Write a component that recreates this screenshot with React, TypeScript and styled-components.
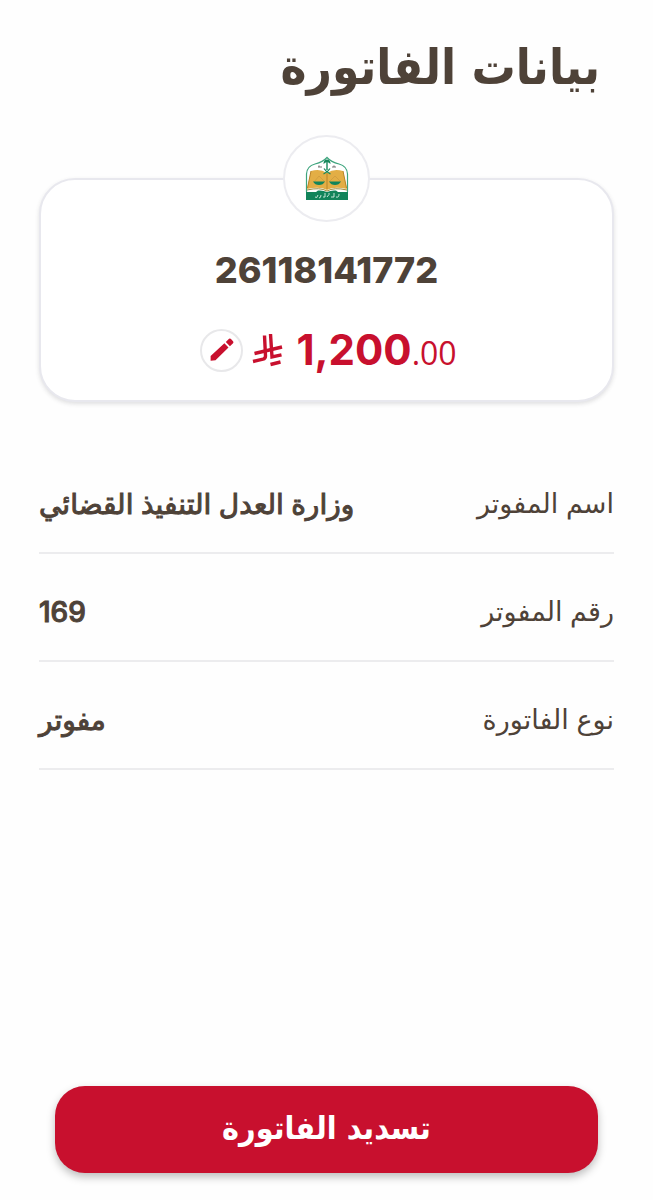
import React from "react";
import styled, { createGlobalStyle } from "styled-components";

const GlobalStyle = createGlobalStyle`
  * { box-sizing: border-box; }
  body {
    margin: 0;
    background: #fefefe;
    color: #4e4238;
    font-family: Inter, "DejaVu Sans", sans-serif;
  }
`;

const Page = styled.main`
  display: flex;
  flex-direction: column;
  min-height: 100vh;
  padding: 30px 39px 27px;
`;

const Title = styled.h1`
  margin: 0;
  padding: 0 14px;
  font-family: "DejaVu Sans Condensed", "DejaVu Sans", sans-serif;
  font-size: 49px;
  line-height: 76px;
  font-weight: 700;
`;

const Card = styled.section`
  display: flex;
  flex-direction: column;
  align-items: center;
  margin-top: 72px;
  padding-bottom: 23px;
  border: 2px solid #e8e8ee;
  border-radius: 36px;
  background: #fff;
  box-shadow: 0 2px 4px rgba(60, 60, 70, 0.16);
`;

const Emblem = styled.div`
  display: grid;
  place-items: center;
  width: 87px;
  height: 87px;
  margin-top: -45px;
  border: 2px solid #ececf0;
  border-radius: 50%;
  background: #fff;
`;

const BillNumber = styled.p`
  margin: 24px 0 0;
  font-size: 36px;
  line-height: 48px;
  font-weight: 800;
`;

const AmountRow = styled.div`
  display: flex;
  align-items: center;
  margin-top: 29px;
  padding-left: 4px;
  color: #c8102e;
`;

const EditButton = styled.button`
  display: grid;
  place-items: center;
  width: 43px;
  height: 43px;
  margin-right: 9px;
  padding: 0;
  border: 2px solid #e8e8ea;
  border-radius: 50%;
  background: #fff;
  color: inherit;
`;

const Amount = styled.span`
  margin-left: 13px;
  font-size: 42px;
  line-height: 54px;
  font-weight: 700;
`;

const Decimals = styled.span`
  font-family: "Open Sans", sans-serif;
  font-size: 32px;
  line-height: 40px;
  font-weight: 400;
`;

const Details = styled.dl`
  margin: 44px 0 0;
`;

const DetailRow = styled.div`
  display: flex;
  align-items: center;
  justify-content: space-between;
  height: 108px;
  padding-top: 10px;
  border-bottom: 2px solid #ececee;
  line-height: 40px;
`;

const Label = styled.dt`
  font-size: 27px;
  font-weight: 400;
`;

const Value = styled.dd`
  margin: 0;
  font-size: 28px;
  font-weight: 500;
  -webkit-text-stroke: 1px currentColor;
`;

const PayButton = styled.button`
  height: 87px;
  margin: auto 16px 0;
  padding: 0 0 4px;
  border: 0;
  border-radius: 30px;
  background: #c8102e;
  color: #fff;
  font-family: "DejaVu Sans Condensed", "DejaVu Sans", sans-serif;
  font-size: 32px;
  line-height: 48px;
  font-weight: 700;
  box-shadow: 0 4px 8px rgba(0, 0, 0, 0.26);
`;

const details = [
  { label: "اسم المفوتر", value: "وزارة العدل التنفيذ القضائي" },
  { label: "رقم المفوتر", value: "169" },
  { label: "نوع الفاتورة", value: "مفوتر" },
];

function MinistryLogo() {
  return (
    <svg width="44" height="46" viewBox="0 0 44 46" role="img" aria-label="وزارة العدل">
      <path d="M1.500 36V18Q2 10 10 8Q18 6 22 1.500Q26 6 34 8Q42 10 42.500 18V36" fill="#fff" stroke="#3da47d" strokeWidth="1.2" />
      <path d="M6 15Q15 12 22 17Q29 12 38 15L42 33Q29 30 22 34Q15 30 2 33Z" fill="#e3ae45" />
      <path d="M22 17V33M6 15L2.500 32M38 15L41.500 32" stroke="#b98429" strokeWidth="1" fill="none" />
      <path d="M2 34Q15 31 22 35Q29 31 42 34" stroke="#9c8a3c" strokeWidth="1" fill="none" />
      <path d="M22 5V14" stroke="#16885c" strokeWidth="1.400" />
      <path d="M22 3.500Q18.500 3.500 18.500 8Q21 6 22 6Q23 6 25.500 8Q25.500 3.500 22 3.500Z" fill="#16885c" />
      <path d="M18.500 18Q23 16 25 12.500M25.500 18Q21 16 19 12.500" stroke="#16885c" strokeWidth="1.200" fill="none" />
      <path d="M13 11H17M14 9.500V11M27 11H31M29 9.500V11" stroke="#777" strokeWidth="1.200" fill="none" />
      <path d="M9 26L14 20L20 26M24 26L30 20L36 26" stroke="#c8953a" strokeWidth="0.6" fill="none" />
      <path d="M8 25.500H20Q18 29 14 29Q10 29 8 25.500ZM24 25.500H36Q34 29 30 29Q26 29 24 25.500Z" fill="#12845a" />
      <path d="M1 36H11L13 34.500Q18 34 22 36Q26 34 31 34.500L33 36H43V44H1Z" fill="#12845a" />
      <path d="M10 41Q12 43 13 39M14 42Q16 42 16 39M18 41H20V37M22 41Q25 38 24 37M26 41H29V37M31 41Q34 42 34 38" stroke="#d9eee4" strokeWidth="0.9" fill="none" />
    </svg>
  );
}

function RiyalSign() {
  return (
    <svg width="31" height="34" viewBox="0 0 31 34" fill="none" stroke="currentColor" strokeWidth="3.400" role="img" aria-label="ريال">
      <path d="M12.500 2.500L13.500 23Q13.500 25.500 11 26.200L1 28.500" />
      <path d="M18.500 1L20 24L29.500 21.800" />
      <path d="M2.500 20.500L30 14" />
      <path d="M18.500 31.500L28.500 29" />
    </svg>
  );
}

function PencilIcon() {
  return (
    <svg width="26" height="26" viewBox="0 0 24 24" fill="currentColor" aria-hidden="true">
      <path d="M1.500 17.500L14.200 5.800L18 9.800L6 21.500L1.500 22ZM15.500 4.500L18.500 1.700Q19.500 1 20.500 2L22.200 4Q23 5 22.200 5.800L19.300 8.500Z" />
    </svg>
  );
}

export default function App() {
  return (
    <Page dir="rtl" lang="ar">
      <GlobalStyle />
      <Title>بيانات الفاتورة</Title>
      <Card>
        <Emblem>
          <MinistryLogo />
        </Emblem>
        <BillNumber>26118141772</BillNumber>
        <AmountRow dir="ltr">
          <EditButton type="button" aria-label="تعديل المبلغ">
            <PencilIcon />
          </EditButton>
          <RiyalSign />
          <Amount>
            1,200<Decimals>.00</Decimals>
          </Amount>
        </AmountRow>
      </Card>
      <Details>
        {details.map((item) => (
          <DetailRow key={item.label}>
            <Label>{item.label}</Label>
            <Value>{item.value}</Value>
          </DetailRow>
        ))}
      </Details>
      <PayButton type="button">تسديد الفاتورة</PayButton>
    </Page>
  );
}
